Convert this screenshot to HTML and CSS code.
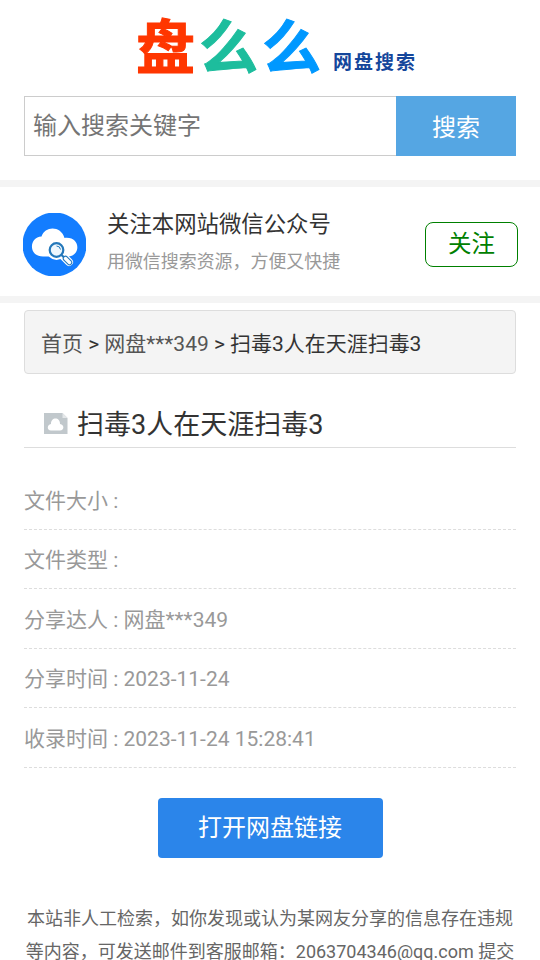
FILE: index.html
```html
<!DOCTYPE html>
<html lang="zh-CN">
<head>
<meta charset="utf-8">
<meta name="viewport" content="width=device-width">
<title>扫毒3人在天涯扫毒3</title>
<link rel="stylesheet" href="styles.css">
</head>
<body>
<header class="header">
  <svg class="logo" width="290" height="92" viewBox="0 0 290 92">
    <text class="logo-main" x="6" y="69" fill="#ff3600" stroke="#ff3600">盘</text>
    <text class="logo-main" x="69" y="69" fill="#1dbd9d" stroke="#1dbd9d">么</text>
    <text class="logo-main" x="132" y="69" fill="#0098ff" stroke="#0098ff">么</text>
    <text class="logo-sub" x="203" y="69">网盘搜索</text>
  </svg>
</header>
<form class="search">
  <input class="search-input" type="text" placeholder="输入搜索关键字">
  <button class="search-button" type="button">搜索</button>
</form>
<section class="follow">
  <svg class="avatar" width="63" height="63" viewBox="0 0 63 63">
    <circle cx="31.5" cy="31.5" r="32" fill="#137dff"/>
    <path d="M20 43.500C5 43.500 6 24 18.500 23.500C22 12.500 38 12.500 41.500 25C58 23 58 43.500 45 43.500Z" fill="#fff"/>
    <circle cx="33.500" cy="37" r="10" fill="#fff"/>
    <path d="M39 42L46 49" stroke="#fff" stroke-width="8" stroke-linecap="round"/>
    <circle cx="33.500" cy="37" r="6.800" fill="#eef7fd" stroke="#2478ba" stroke-width="2.200"/>
    <path d="M38.500 42L46 49" stroke="#2478ba" stroke-width="2.200"/>
    <path d="M42.500 45.500L46.500 49.500" stroke="#2478ba" stroke-width="5.500" stroke-linecap="round"/>
    <path d="M42.500 45.500L46.500 49.500" stroke="#fff" stroke-width="3.400" stroke-linecap="round"/>
    <path d="M33.500 33Q37 33 37.500 36.500" fill="none" stroke="#2478ba" stroke-width="1"/>
  </svg>
  <div class="follow-text">
    <div class="follow-title">关注本网站微信公众号</div>
    <div class="follow-desc">用微信搜索资源，方便又快捷</div>
  </div>
  <a class="follow-button">关注</a>
</section>
<main class="content">
  <nav class="crumbs"><a>首页</a> &gt; <a>网盘***349</a> &gt; 扫毒3人在天涯扫毒3</nav>
  <h1 class="title">
    <svg class="file-icon" width="24" height="21" viewBox="0 0 24 21">
      <path d="M0 0H18.500L23.500 5V21H0Z" fill="#c1c8cc"/>
      <path d="M18.500 0V5H23.500Z" fill="#e4e7e9"/>
      <path d="M7 17.500C2.500 17.500 3 11.500 7 11C6.500 3.500 16.500 3.500 16 11C20.500 11.500 20.500 17.500 16 17.500Z" fill="#fff"/>
    </svg>
    <span>扫毒3人在天涯扫毒3</span>
  </h1>
  <ul class="info">
    <li>文件大小 :</li>
    <li>文件类型 :</li>
    <li>分享达人 : 网盘***349</li>
    <li>分享时间 : 2023-11-24</li>
    <li>收录时间 : 2023-11-24 15:28:41</li>
  </ul>
  <a class="open-button">打开网盘链接</a>
  <p class="notice">本站非人工检索，如你发现或认为某网友分享的信息存在违规<br>等内容，可发送邮件到客服邮箱：2063704346@qq.com 提交</p>
</main>
</body>
</html>
```
FILE: styles.css
```css
* {
  box-sizing: border-box;
}
html {
  overflow: hidden;
}
body {
  margin: 0;
  height: 960px;
  overflow: hidden;
  background: #fff;
  color: #333;
  font-family: Roboto, "Noto Sans CJK SC", sans-serif;
}
.header {
  height: 96px;
  padding-left: 130px;
}
.logo {
  display: block;
}
.logo-main {
  font: 700 59px "Noto Sans CJK SC", sans-serif;
  stroke-width: 1px;
}
.logo-sub {
  font: 700 19px "Noto Sans CJK SC", sans-serif;
  letter-spacing: 2px;
  fill: #14469b;
}
.search {
  display: flex;
  height: 60px;
  margin: 0 24px 24px;
}
.search-input {
  flex: 1;
  min-width: 0;
  padding: 0 8px;
  border: 1px solid #ccc;
  border-right: 0;
  border-radius: 0;
  outline: 0;
  background: #fff;
  font: 24px Roboto, "Noto Sans CJK SC", sans-serif;
}
.search-input::placeholder {
  color: #757575;
}
.search-button {
  width: 120px;
  padding: 0 0 1px;
  border: 0;
  background: #55a6e3;
  color: #fff;
  font: 24px Roboto, "Noto Sans CJK SC", sans-serif;
}
.follow {
  display: flex;
  height: 123px;
  padding: 0 22px 0 23px;
  border-top: 7px solid #f4f4f4;
  border-bottom: 7px solid #f4f4f4;
}
.avatar {
  margin-top: 26px;
}
.follow-text {
  flex: 1;
  margin: 18px 0 0 21px;
}
.follow-title {
  font-size: 22.400px;
  line-height: 38px;
}
.follow-desc {
  color: #999;
  font-size: 17.950px;
  line-height: 37px;
}
.follow-button {
  width: 93px;
  height: 45px;
  margin-top: 35px;
  border: 1px solid #008000;
  border-radius: 8px;
  color: #008000;
  font-size: 23.500px;
  line-height: 42px;
  text-align: center;
}
.content {
  padding: 7px 24px 0;
}
.crumbs {
  height: 64px;
  padding-left: 16px;
  border: 1px solid #ddd;
  border-radius: 4px;
  background: #f4f4f4;
  font-size: 20.980px;
  line-height: 67px;
  white-space: nowrap;
}
.crumbs a {
  color: #555;
}
.title {
  display: flex;
  align-items: center;
  gap: 9px;
  height: 48px;
  margin: 26px 0 22px;
  padding-left: 20px;
  border-bottom: 1px solid #ddd;
  font-size: 27px;
  font-weight: 400;
  line-height: 48px;
}
.title span {
  padding-top: 2px;
}
.info {
  margin: 0;
  padding: 0;
  list-style: none;
  color: #999;
  font-size: 21px;
}
.info li {
  height: 59.500px;
  border-bottom: 1px dashed #ddd;
  line-height: 61px;
}
.info li:nth-child(odd) {
  padding-top: 1px;
}
.open-button {
  display: block;
  width: 225px;
  height: 60px;
  margin: 30px auto 0;
  border-radius: 4px;
  background: #2b85ea;
  color: #fff;
  font-size: 24px;
  line-height: 60px;
  text-align: center;
}
.notice {
  margin: 44px 0 0;
  color: #666;
  font-size: 18px;
  line-height: 33.500px;
  text-align: center;
  white-space: nowrap;
}
```
